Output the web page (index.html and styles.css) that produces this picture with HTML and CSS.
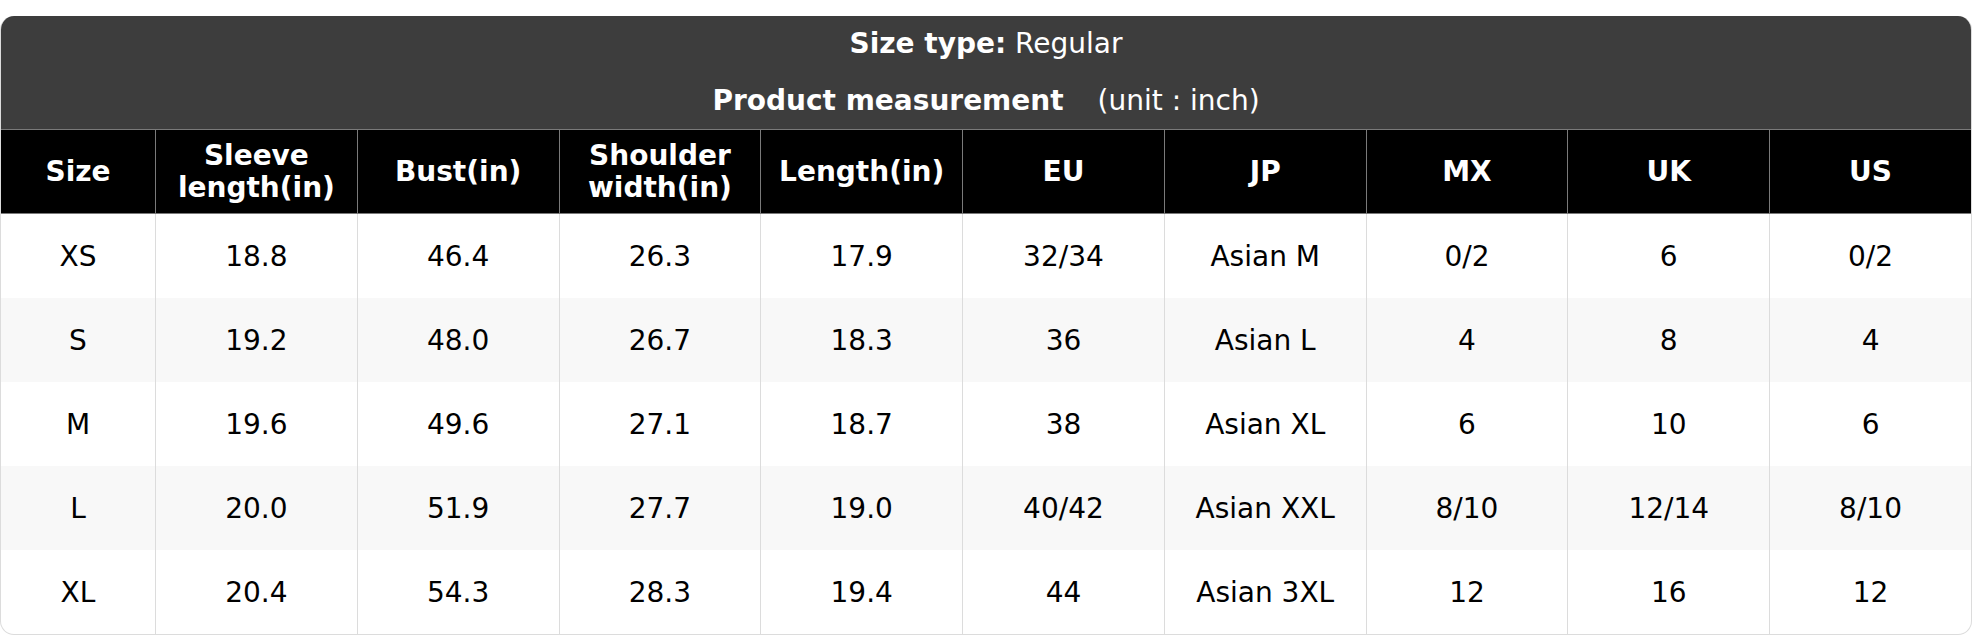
FILE: index.html
```html
<!DOCTYPE html>
<html lang="en">
<head>
<meta charset="utf-8">
<title>Size chart</title>
<link rel="stylesheet" href="styles.css">
</head>
<body>
<div class="chart">
  <div class="chart-title">
    <div class="title-line"><b>Size type:</b> Regular</div>
    <div class="title-line"><b>Product measurement</b><span class="unit">(unit : inch)</span></div>
  </div>
  <table class="size-table">
    <colgroup>
      <col class="col-size">
      <col><col><col><col><col><col><col><col><col>
    </colgroup>
    <thead>
      <tr>
        <th>Size</th>
        <th>Sleeve<br>length(in)</th>
        <th>Bust(in)</th>
        <th>Shoulder<br>width(in)</th>
        <th>Length(in)</th>
        <th>EU</th>
        <th>JP</th>
        <th>MX</th>
        <th>UK</th>
        <th>US</th>
      </tr>
    </thead>
    <tbody>
      <tr><td>XS</td><td>18.8</td><td>46.4</td><td>26.3</td><td>17.9</td><td>32/34</td><td>Asian M</td><td>0/2</td><td>6</td><td>0/2</td></tr>
      <tr><td>S</td><td>19.2</td><td>48.0</td><td>26.7</td><td>18.3</td><td>36</td><td>Asian L</td><td>4</td><td>8</td><td>4</td></tr>
      <tr><td>M</td><td>19.6</td><td>49.6</td><td>27.1</td><td>18.7</td><td>38</td><td>Asian XL</td><td>6</td><td>10</td><td>6</td></tr>
      <tr><td>L</td><td>20.0</td><td>51.9</td><td>27.7</td><td>19.0</td><td>40/42</td><td>Asian XXL</td><td>8/10</td><td>12/14</td><td>8/10</td></tr>
      <tr><td>XL</td><td>20.4</td><td>54.3</td><td>28.3</td><td>19.4</td><td>44</td><td>Asian 3XL</td><td>12</td><td>16</td><td>12</td></tr>
    </tbody>
  </table>
</div>
</body>
</html>
```
FILE: styles.css
```css
html, body {
  margin: 0;
  padding: 0;
  background: #fff;
}
body {
  padding-top: 16px;
  font-family: "DejaVu Sans", "Liberation Sans", sans-serif;
  font-size: 28px;
  color: #000;
}
.chart {
  border-radius: 14px;
  overflow: hidden;
  border: 1px solid #dcdcdc;
  border-top: none;
  background: #fff;
}
.chart-title {
  background: #3d3d3d;
  color: #fff;
  padding: 8px 0 8px;
  text-align: center;
}
.title-line {
  line-height: 40px;
}
.title-line + .title-line {
  margin-top: 17px;
}
.title-line b {
  font-weight: bold;
}
.unit {
  margin-left: 34px;
}
.size-table {
  table-layout: fixed;
  border-collapse: collapse;
  margin-left: -1px;
  width: calc(100% + 2px);
}
.col-size {
  width: 155px;
}
.size-table th {
  background: #000;
  color: #fff;
  font-weight: bold;
  height: 83px;
  line-height: 32px;
  padding: 0;
  border: 1px solid #7a7a7a;
  text-align: center;
  vertical-align: middle;
}
.size-table td {
  height: 84px;
  padding: 0;
  border: 1px solid #dcdcdc;
  border-top: none;
  border-bottom: none;
  text-align: center;
  vertical-align: middle;
}
.size-table tbody tr:nth-child(even) td {
  background: #f8f8f8;
}
```
